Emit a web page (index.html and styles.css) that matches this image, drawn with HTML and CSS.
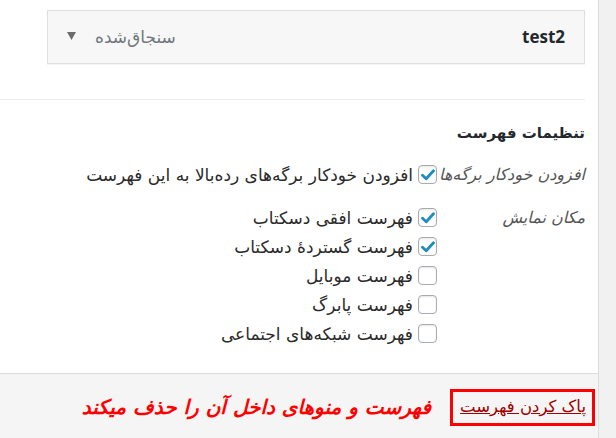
FILE: index.html
```html
<!DOCTYPE html>
<html lang="fa" dir="rtl">
<head>
<meta charset="utf-8">
<title>تنظیمات فهرست</title>
<link rel="stylesheet" href="styles.css">
</head>
<body>
<div class="page">
  <div class="panel">
    <div class="top">
      <div class="item-bar">
        <span class="item-title">test2</span>
        <span class="item-controls">
          <span class="item-type">سنجاق‌شده</span>
          <svg class="arrow" width="9" height="8" viewBox="0 0 9 8"><path d="M0 0 H9 L4.5 8 Z" fill="#6d6d6d"/></svg>
        </span>
      </div>
    </div>
    <div class="settings">
      <h3 class="heading">تنظیمات فهرست</h3>
      <div class="row">
        <div class="label">افزودن خودکار برگه‌ها</div>
        <div class="option">
          <span class="check on"><svg width="14" height="12" viewBox="0 0 14 12"><path d="M1.5 6.2 L5.2 9.8 L12.5 1.8" fill="none" stroke="#1e8cbe" stroke-width="2.8" stroke-linecap="round" stroke-linejoin="round"/></svg></span>
          <span class="text">افزودن خودکار برگه‌های رده‌بالا به این فهرست</span>
        </div>
      </div>
      <div class="row group">
        <div class="label">مکان نمایش</div>
        <div class="options">
          <div class="option">
            <span class="check on"><svg width="14" height="12" viewBox="0 0 14 12"><path d="M1.5 6.2 L5.2 9.8 L12.5 1.8" fill="none" stroke="#1e8cbe" stroke-width="2.8" stroke-linecap="round" stroke-linejoin="round"/></svg></span>
            <span class="text">فهرست افقی دسکتاب</span>
          </div>
          <div class="option">
            <span class="check on"><svg width="14" height="12" viewBox="0 0 14 12"><path d="M1.5 6.2 L5.2 9.8 L12.5 1.8" fill="none" stroke="#1e8cbe" stroke-width="2.8" stroke-linecap="round" stroke-linejoin="round"/></svg></span>
            <span class="text">فهرست گستردهٔ دسکتاب</span>
          </div>
          <div class="option">
            <span class="check"></span>
            <span class="text">فهرست موبایل</span>
          </div>
          <div class="option">
            <span class="check"></span>
            <span class="text">فهرست پابرگ</span>
          </div>
          <div class="option">
            <span class="check"></span>
            <span class="text">فهرست شبکه‌های اجتماعی</span>
          </div>
        </div>
      </div>
    </div>
    <div class="footer">
      <a class="delete" href="#">پاک کردن فهرست</a>
      <span class="note">فهرست و منوهای داخل آن را حذف میکند</span>
    </div>
  </div>
  <div class="side"></div>
</div>
</body>
</html>
```

FILE: styles.css
```css
html, body {
  margin: 0;
  padding: 0;
  height: 100%;
}
body {
  background: #f1f1f1;
  font-family: "DejaVu Sans", sans-serif;
  color: #333;
  overflow: hidden;
}
.page {
  display: flex;
  flex-direction: row;
  height: 438px;
  direction: ltr;
}
.panel {
  width: 598px;
  border-right: 1px solid #dcdcdc;
  background: #fff;
  direction: rtl;
  display: flex;
  flex-direction: column;
}
.side {
  flex: 1;
  background: #f1f1f1;
}
.top {
  height: 100px;
  margin-right: 13px;
  padding-top: 10px;
  box-sizing: border-box;
  border-bottom: 1px solid #eeeeee;
}
.item-bar {
  height: 54px;
  box-sizing: border-box;
  margin-left: 47px;
  border: 1px solid #dfdfdf;
  background: #f7f7f7;
  box-shadow: 0 1px 1px rgba(0,0,0,0.04);
  display: flex;
  align-items: center;
  justify-content: space-between;
  padding: 0 19px 0 19px;
}
.item-title {
  font-family: "Open Sans", sans-serif;
  font-weight: 700;
  font-size: 17px;
  color: #23282d;
  margin-top: -1px;
}
.item-controls {
  display: flex;
  align-items: center;
  gap: 19px;
}
.item-type {
  font-size: 17px;
  color: #72777c;
}
.arrow {
  display: block;
  margin-top: -2px;
}
.settings {
  padding: 21px 13px 0 0;
  height: 273px;
  box-sizing: border-box;
}
.heading {
  margin: 0 0 15px 0;
  font-size: 15px;
  line-height: 24px;
  font-weight: 700;
  color: #23282d;
}
.row {
  display: flex;
  align-items: flex-start;
}
.row.group {
  margin-top: 14px;
}
.label {
  width: 148px;
  flex: none;
  white-space: nowrap;
  font-style: italic;
  font-size: 16px;
  line-height: 29px;
  color: #555;
}
.options {
  display: flex;
  flex-direction: column;
}
.option {
  display: flex;
  align-items: center;
  height: 29px;
  gap: 5px;
}
.check {
  width: 19px;
  height: 19px;
  box-sizing: border-box;
  border: 1px solid #a7acb1;
  border-radius: 4px;
  background: #fff;
  box-shadow: inset 0 1px 2px rgba(0,0,0,0.1);
  display: flex;
  align-items: center;
  justify-content: center;
  flex: none;
}
.check svg {
  display: block;
}
.text {
  font-size: 17px;
  color: #2a2a2a;
  white-space: nowrap;
}
.footer {
  flex: 1;
  background: #f5f5f5;
  border-top: 1px solid #dddddd;
  display: flex;
  align-items: flex-start;
  padding: 15px 0 0 0;
}
.delete {
  display: block;
  margin-right: 3px;
  border: 3px solid #ff0000;
  height: 37px;
  width: 145px;
  box-sizing: border-box;
  padding: 0 6px 0 0;
  font-size: 16.5px;
  line-height: 30px;
  color: #a00000;
  text-decoration: underline;
  white-space: nowrap;
}
.note {
  margin-right: 19px;
  font-size: 20px;
  font-weight: 700;
  font-style: italic;
  color: #ff0000;
  line-height: 36px;
  white-space: nowrap;
}
```
